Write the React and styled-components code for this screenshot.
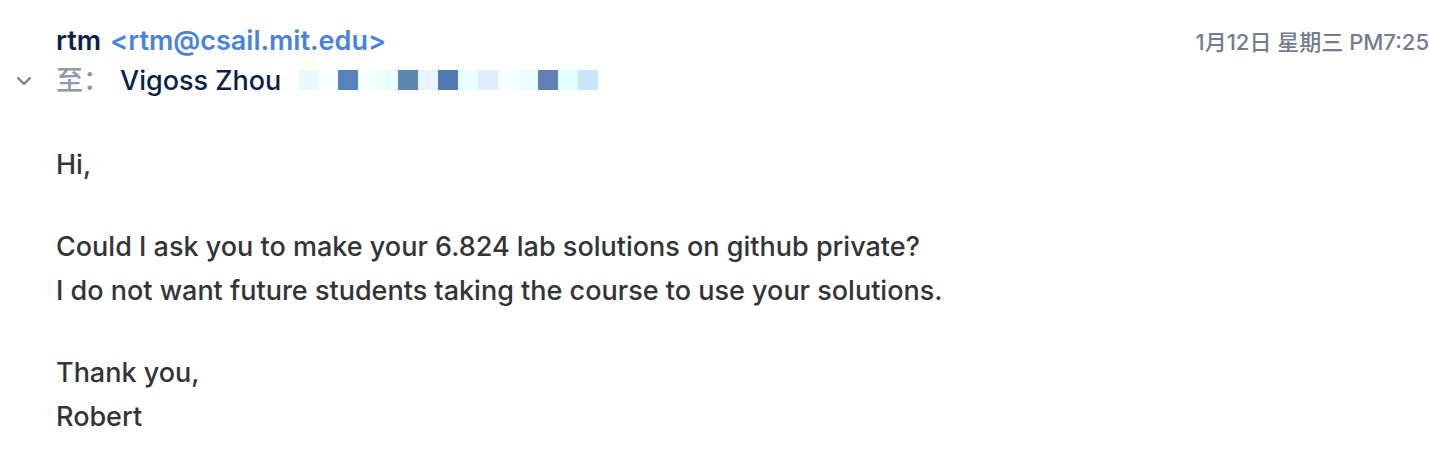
import React from "react";
import styled, { createGlobalStyle } from "styled-components";

const GlobalStyle = createGlobalStyle`
  body {
    margin: 0;
    background: #fff;
    color: #333436;
    font-family: Inter, "Noto Sans CJK SC", sans-serif;
    font-size: 27px;
    font-weight: 500;
    line-height: 40px;
  }
`;

const Message = styled.article`
  padding: 21px 0 28px;
`;

const Header = styled.header`
  display: grid;
  grid-template-columns: 56px 1fr auto;
  grid-template-rows: 40px 40px;
`;

const Sender = styled.div`
  grid-column: 2;
  display: flex;
  gap: 9px;
  color: #0a1f49;
  font-weight: 600;
  white-space: nowrap;
`;

const Address = styled.a`
  color: #4b83dc;
  text-decoration: none;
`;

const DateLabel = styled.time`
  color: #737d8f;
  font-size: 22px;
  line-height: 42px;
  padding-right: 1px;
  white-space: nowrap;
`;

const Toggle = styled.button`
  display: flex;
  align-items: center;
  justify-content: flex-end;
  width: 32px;
  height: 40px;
  padding: 0;
  border: 0;
  background: none;
  color: #6e7482;
`;

const Recipients = styled.div`
  display: flex;
  align-items: baseline;
  color: #0a1f49;
  white-space: nowrap;
`;

const Label = styled.span`
  width: 64px;
  color: #8f98aa;
`;

const Recipient = styled.span`
  width: 178px;
`;

const Mosaic = styled.div`
  position: relative;
  display: flex;
  &::before {
    content: "";
    position: absolute;
    left: 0;
    bottom: 20px;
    width: 20px;
    height: 13px;
    border-radius: 12px 0 0 0;
    background: #fffff0;
  }
`;

const Tile = styled.span`
  width: 20px;
  height: 20px;
  background: ${(p) => p.$tone};
`;

const Body = styled.div`
  padding: 42px 56px 0;
  line-height: 44px;
`;

const Paragraph = styled.p`
  margin: 0 0 38px;
  &:last-child {
    margin-bottom: 0;
  }
`;

const tones = [
  "#e9faff", "#f9ffff", "#5583bb", "#f5fffd", "#ebffff",
  "#5c87b0", "#ebf5ff", "#557ab3", "#eaffff", "#e2ecff",
  "#f6ffff", "#eafffd", "#6380b5", "#e2ffff", "#cce5ff",
];

export default function App() {
  return (
    <>
      <GlobalStyle />
      <Message>
        <Header>
          <Sender>
            <span>rtm</span>
            <Address href="mailto:rtm@csail.mit.edu">&lt;rtm@csail.mit.edu&gt;</Address>
          </Sender>
          <DateLabel>1月12日 星期三 PM7:25</DateLabel>
          <Toggle type="button" aria-label="Details">
            <svg width="16" height="10" viewBox="0 0 16 10" fill="none" stroke="currentColor" strokeWidth="1.8" strokeLinecap="round" strokeLinejoin="round">
              <path d="M2 2L8 8L14 2" />
            </svg>
          </Toggle>
          <Recipients>
            <Label lang="zh-CN">至：</Label>
            <Recipient>Vigoss Zhou</Recipient>
            <Mosaic aria-hidden="true">
              {tones.map((tone, i) => (
                <Tile key={i} $tone={tone} />
              ))}
            </Mosaic>
          </Recipients>
        </Header>
        <Body>
          <Paragraph>Hi,</Paragraph>
          <Paragraph>
            Could I ask you to make your 6.824 lab solutions on github private?
            <br />
            I do not want future students taking the course to use your solutions.
          </Paragraph>
          <Paragraph>
            Thank you,
            <br />
            Robert
          </Paragraph>
        </Body>
      </Message>
    </>
  );
}
